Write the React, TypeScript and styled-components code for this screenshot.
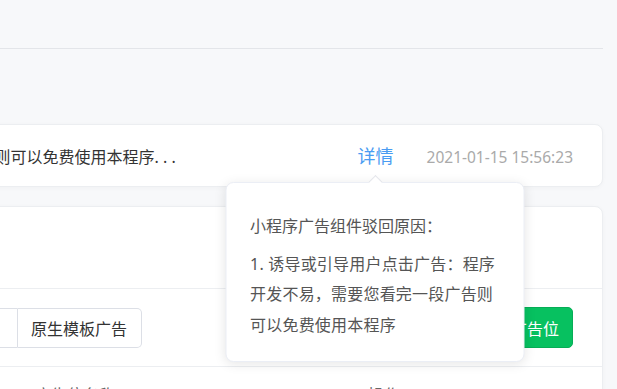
import React from "react";
import styled, { createGlobalStyle } from "styled-components";

const GlobalStyle = createGlobalStyle`
  html, body {
    margin: 0;
    padding: 0;
    background: #f7f8fa;
    overflow: hidden;
  }
  body {
    font-family: "Noto Sans", "Noto Sans CJK SC", sans-serif;
    color: #333;
  }
  * { box-sizing: border-box; }
`;

const Page = styled.div`
  width: 617px;
  height: 389px;
  overflow: hidden;
  background: #f7f8fa;
`;

const Main = styled.div`
  margin-left: -111px;
  width: 714px;
  display: flex;
  flex-direction: column;
`;

const TopBar = styled.div`
  height: 49px;
  border-bottom: 1px solid #e3e5e9;
  flex-shrink: 0;
`;

const Card = styled.div<{ $top: number }>`
  margin-top: ${(p) => p.$top}px;
  background: #fff;
  border: 1px solid #eceef1;
  border-radius: 8px;
  box-shadow: 0 1px 4px rgba(0, 0, 0, 0.03);
`;

const MessageRow = styled.div`
  height: 61px;
  display: flex;
  align-items: center;
  padding-right: 29px;
`;

const ReasonClip = styled.div`
  width: 290px;
  display: flex;
  justify-content: flex-end;
  overflow: hidden;
  white-space: nowrap;
  font-size: 16px;
  color: #333;
  line-height: 24px;
  padding-top: 2px;
`;

const Dots = styled.span`
  letter-spacing: 4.2px;
`;

const Spacer = styled.div`
  flex: 1;
`;

const DetailWrap = styled.div`
  position: relative;
  margin-right: 33px;
`;

const DetailLink = styled.span`
  display: block;
  font-size: 18px;
  line-height: 24px;
  color: #4a9cf2;
  cursor: pointer;
`;

const DateText = styled.span`
  font-size: 15.5px;
  color: #aaaaaa;
  line-height: 24px;
  padding-top: 2px;
`;

const Popover = styled.div`
  position: absolute;
  z-index: 10;
  top: calc(100% + 14px);
  left: 50%;
  transform: translateX(-50%);
  margin-left: -1px;
  width: 299px;
  padding: 28px 24px 21px;
  background: #fff;
  border: 1px solid #ebeef5;
  border-radius: 8px;
  box-shadow: 0 2px 12px rgba(0, 0, 0, 0.1);
  color: #555;
  font-size: 16px;
`;

const Arrow = styled.div`
  position: absolute;
  top: -6px;
  left: 50%;
  width: 10px;
  height: 10px;
  margin-left: -4px;
  background: #fff;
  border-top: 1px solid #e4e6eb;
  border-left: 1px solid #e4e6eb;
  transform: rotate(45deg);
`;

const PopTitle = styled.div`
  line-height: 30px;
  margin-bottom: 8px;
`;

const PopBody = styled.div`
  line-height: 30.5px;
  letter-spacing: 0.2px;
`;

const SectionHead = styled.div`
  height: 82px;
  border-bottom: 1px solid #eceef1;
`;

const Toolbar = styled.div`
  display: flex;
  align-items: center;
  justify-content: space-between;
  padding: 18px 29px 18px 18px;
  border-bottom: 1px solid #eceef1;
`;

const Segmented = styled.div`
  display: flex;
`;

const Segment = styled.button<{ $first?: boolean }>`
  height: 40px;
  padding: ${(p) => (p.$first ? "0 24px 0 4px" : "0 14px 0 13px")};
  background: #fff;
  border: 1px solid #dcdfe6;
  border-left-width: ${(p) => (p.$first ? "1px" : "0")};
  border-radius: ${(p) => (p.$first ? "5px 0 0 5px" : "0 5px 5px 0")};
  font-family: inherit;
  font-size: 16px;
  color: #333;
  cursor: pointer;
`;

const PrimaryButton = styled.button`
  height: 41px;
  padding: 0 13px;
  background: #07c160;
  border: 1px solid #06ad56;
  border-radius: 5px;
  color: #fff;
  font-family: inherit;
  font-size: 16px;
  cursor: pointer;
`;

const TableHead = styled.div`
  display: grid;
  grid-template-columns: 145px 333px 1fr;
  padding-top: 16px;
  font-size: 16px;
  line-height: 24px;
  color: #666;
`;

const HeadCell = styled.div``;

export default function App() {
  return (
    <Page>
      <GlobalStyle />
      <Main>
        <TopBar />
        <Card $top={75}>
          <MessageRow>
            <ReasonClip>
              <span>
                1. 诱导或引导用户点击广告：程序开发不易，需要您看完一段广告则可以免费使用本程序
                <Dots>...</Dots>
              </span>
            </ReasonClip>
            <Spacer />
            <DetailWrap>
              <DetailLink>详情</DetailLink>
              <Popover>
                <Arrow />
                <PopTitle>小程序广告组件驳回原因：</PopTitle>
                <PopBody>1. 诱导或引导用户点击广告：程序开发不易，需要您看完一段广告则可以免费使用本程序</PopBody>
              </Popover>
            </DetailWrap>
            <DateText>2021-01-15 15:56:23</DateText>
          </MessageRow>
        </Card>
        <Card $top={19}>
          <SectionHead />
          <Toolbar>
            <Segmented>
              <Segment $first>激励式广告</Segment>
              <Segment>原生模板广告</Segment>
            </Segmented>
            <PrimaryButton>新建广告位</PrimaryButton>
          </Toolbar>
          <TableHead>
            <HeadCell>ID</HeadCell>
            <HeadCell>广告位名称</HeadCell>
            <HeadCell>操作</HeadCell>
          </TableHead>
        </Card>
      </Main>
    </Page>
  );
}
